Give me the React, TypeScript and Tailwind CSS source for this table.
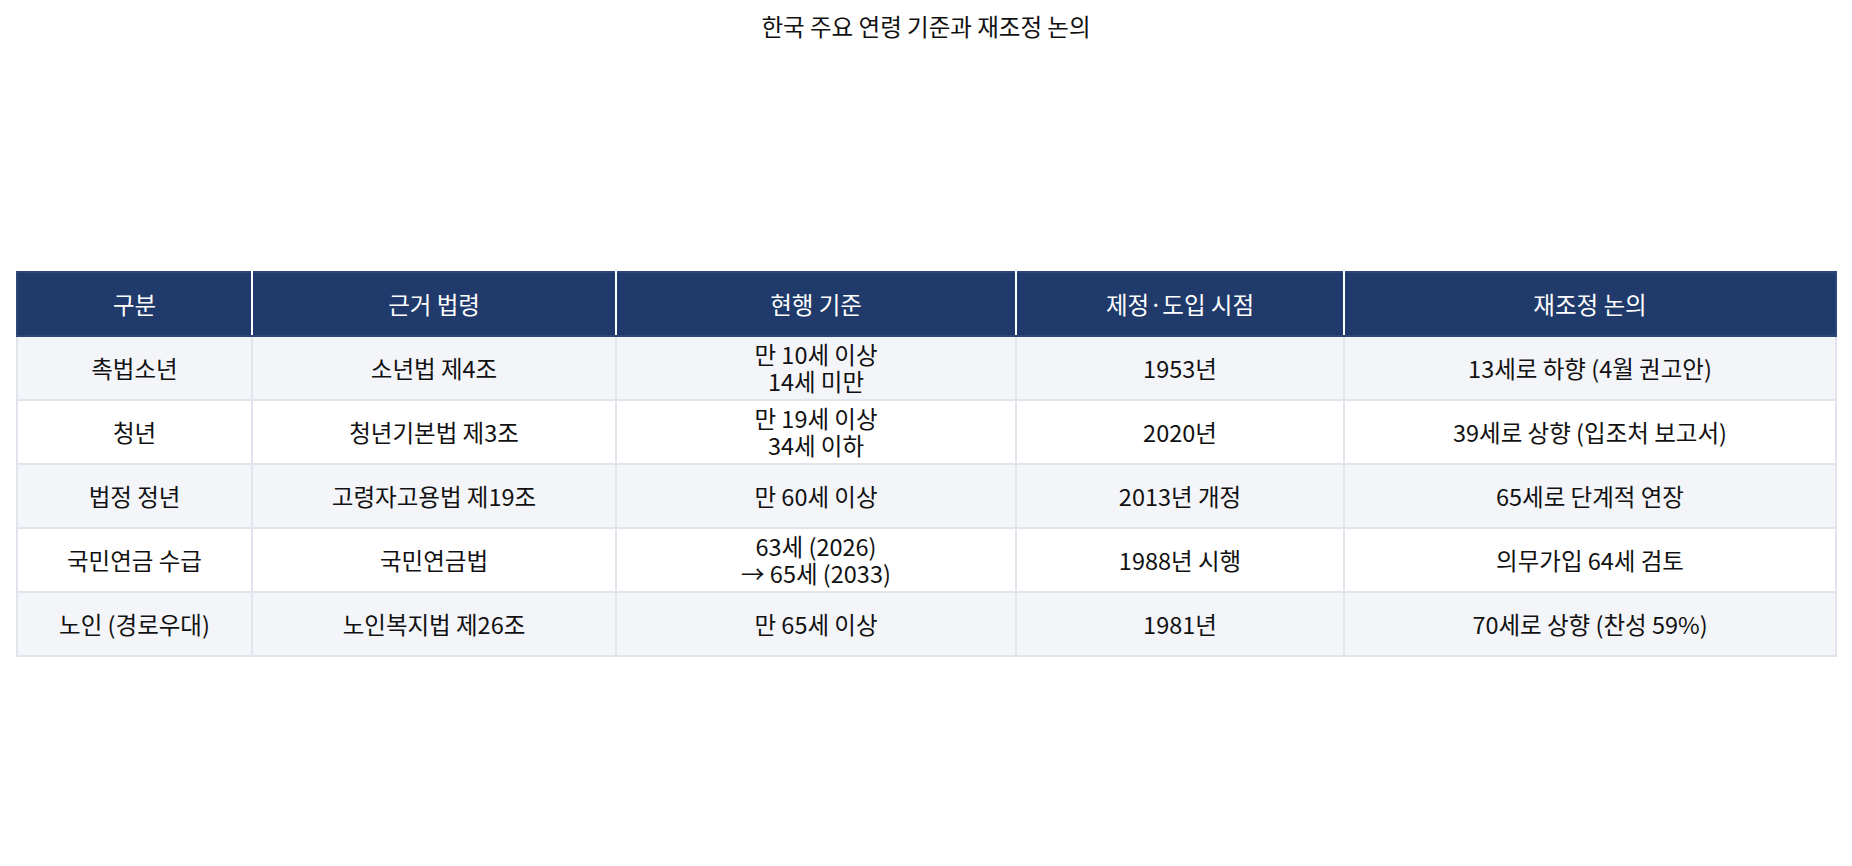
const headers = ["구분", "근거 법령", "현행 기준", "제정·도입 시점", "재조정 논의"];

const rows: string[][] = [
  ["촉법소년", "소년법 제4조", "만 10세 이상\n14세 미만", "1953년", "13세로 하향 (4월 권고안)"],
  ["청년", "청년기본법 제3조", "만 19세 이상\n34세 이하", "2020년", "39세로 상향 (입조처 보고서)"],
  ["법정 정년", "고령자고용법 제19조", "만 60세 이상", "2013년 개정", "65세로 단계적 연장"],
  ["국민연금 수급", "국민연금법", "63세 (2026)\n→ 65세 (2033)", "1988년 시행", "의무가입 64세 검토"],
  ["노인 (경로우대)", "노인복지법 제26조", "만 65세 이상", "1981년", "70세로 상향 (찬성 59%)"],
];

const widths = ["w-[235px]", "w-[364px]", "w-[400px]", "w-[328px]", "w-[492px]"];

export default function App() {
  return (
    <div
      className="w-[1852px] h-[866px] bg-white flex flex-col text-[#111]"
      style={{ fontFamily: '"Noto Sans CJK KR", "Noto Sans", sans-serif' }}
    >
      <h1 className="text-center text-[23.5px] leading-[32px] pt-[10px] font-normal">
        한국 주요 연령 기준과 재조정 논의
      </h1>
      <div className="px-4 pt-[229px]">
        <table className="w-full border-collapse table-fixed">
          <thead>
            <tr className="bg-[#1f3a6b] text-white">
              {headers.map((h, i) => (
                <th
                  key={h}
                  className={`${widths[i]} h-[64px] p-0 font-normal text-[23.5px] leading-[27px] border-2 border-[#2c4777] ${i > 0 ? "border-l-white" : ""} ${i < headers.length - 1 ? "border-r-white" : ""}`}
                >
                  {h}
                </th>
              ))}
            </tr>
          </thead>
          <tbody>
            {rows.map((r, ri) => (
              <tr key={ri} className={ri % 2 === 0 ? "bg-[#f4f5f9]" : "bg-white"}>
                {r.map((c, ci) => (
                  <td
                    key={ci}
                    className="h-[64px] p-0 text-center text-[23.5px] leading-[27px] border-2 border-[#e1e4ed] whitespace-pre-line"
                  >
                    {c}
                  </td>
                ))}
              </tr>
            ))}
          </tbody>
        </table>
      </div>
    </div>
  );
}
